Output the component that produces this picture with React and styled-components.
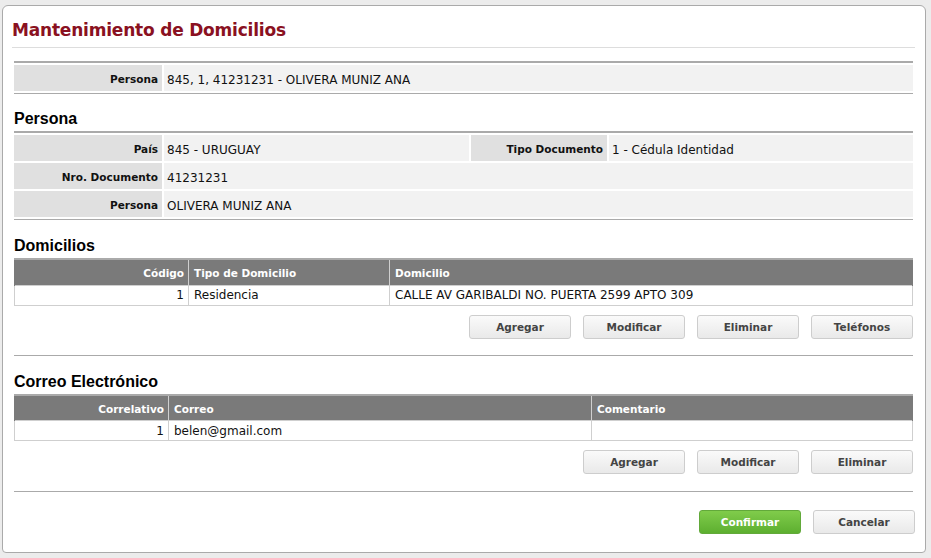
import React from 'react';
import styled, { createGlobalStyle } from 'styled-components';

const GlobalStyle = createGlobalStyle`
  html, body {
    margin: 0;
    padding: 0;
    background: #ececec;
  }
  body {
    font-family: 'DejaVu Sans', Tahoma, Verdana, sans-serif;
    font-size: 12px;
    color: #111;
  }
`;

const Page = styled.div`
  padding: 5px 5px 5px 2px;
`;

const Panel = styled.div`
  background: #fff;
  border: 1px solid #aaa;
  border-radius: 6px 6px 4px 4px;
  padding: 0 12px 18px 11px;
`;

const Title = styled.h1`
  margin: 0 -2px 13px;
  padding: 14px 0 7px;
  border-bottom: 1px solid #ddd;
  font-family: 'DejaVu Sans', Tahoma, sans-serif;
  font-size: 17px;
  letter-spacing: -0.2px;
  font-weight: bold;
  color: #8a1121;
  line-height: 20px;
`;

const SectionTitle = styled.h2`
  margin: ${p => p.$top || 16}px 0 3px;
  font-family: 'Liberation Sans', Arial, sans-serif;
  font-size: 16px;
  font-weight: bold;
  line-height: 18px;
  color: #000;
`;

const InfoGrid = styled.div`
  display: grid;
  grid-template-columns: ${p => p.$cols};
  gap: 2px;
  padding: 2px 0;
  border-top: 2px solid #aaa;
  border-bottom: 1px solid #aaa;
`;

const Label = styled.div`
  background: #e0e0e0;
  height: 26px;
  padding: 8px 4px 0 0;
  box-sizing: border-box;
  text-align: right;
  font-weight: bold;
  font-size: 10.5px;
  color: #111;
`;

const Value = styled.div`
  background: #f2f2f2;
  height: 26px;
  padding: 8px 0 0 3px;
  box-sizing: border-box;
  font-size: 12px;
  color: #111;
  grid-column: ${p => p.$span || 'auto'};
`;

const Grid = styled.table`
  width: 100%;
  table-layout: fixed;
  border-collapse: collapse;
  border-top: 2px solid #aaa;
`;

const Th = styled.th`
  box-sizing: border-box;
  width: ${p => p.$w || 'auto'};
  background: #7a7a7a;
  color: #fff;
  height: 26px;
  padding: 2px 4px 0 5px;
  font-size: 10.5px;
  font-weight: bold;
  text-align: ${p => (p.$right ? 'right' : 'left')};
  border-left: 1px solid #cfcfcf;
  border-right: 1px solid #cfcfcf;
  &:first-child {
    border-left: 1px solid #7a7a7a;
  }
  &:last-child {
    border-right: 1px solid #7a7a7a;
  }
`;

const Td = styled.td`
  height: 19px;
  padding: 0 4px 0 5px;
  font-size: 12px;
  border: 1px solid #cfcfcf;
  text-align: ${p => (p.$right ? 'right' : 'left')};
  white-space: nowrap;
  overflow: hidden;
`;

const Actions = styled.div`
  display: flex;
  justify-content: flex-end;
  gap: 12px;
  margin-top: ${p => p.$top || 9}px;
`;

const Button = styled.button`
  width: 102px;
  height: 24px;
  border: 1px solid #cdcdcd;
  border-radius: 3px;
  background: linear-gradient(#fafafa, #e9e9e9);
  font-family: 'DejaVu Sans', Tahoma, sans-serif;
  font-size: 10.5px;
  font-weight: bold;
  color: #444;
  padding: 0;
  cursor: pointer;
`;

const PrimaryButton = styled(Button)`
  border-color: #62a93a;
  background: linear-gradient(#80cc4b, #5daf30);
  color: #fff;
`;

const Divider = styled.hr`
  border: 0;
  border-top: 1px solid #aaa;
  margin: ${p => p.$top || 16}px 0 0;
`;

const Footer = styled.div`
  margin: 0 -2px;
`;

const App = () => (
  <Page>
    <GlobalStyle />
    <Panel>
      <Title>Mantenimiento de Domicilios</Title>

      <InfoGrid $cols="148px 1fr">
        <Label>Persona</Label>
        <Value>845, 1, 41231231 - OLIVERA MUNIZ ANA</Value>
      </InfoGrid>

      <SectionTitle>Persona</SectionTitle>
      <InfoGrid $cols="148px 305px 136px 1fr">
        <Label>País</Label>
        <Value>845 - URUGUAY</Value>
        <Label>Tipo Documento</Label>
        <Value>1 - Cédula Identidad</Value>
        <Label>Nro. Documento</Label>
        <Value $span="2 / 5">41231231</Value>
        <Label>Persona</Label>
        <Value $span="2 / 5">OLIVERA MUNIZ ANA</Value>
      </InfoGrid>

      <SectionTitle $top={17}>Domicilios</SectionTitle>
      <Grid>
        <thead>
          <tr>
            <Th $w="174px" $right>Código</Th>
            <Th $w="201px">Tipo de Domicilio</Th>
            <Th>Domicilio</Th>
          </tr>
        </thead>
        <tbody>
          <tr>
            <Td $right>1</Td>
            <Td>Residencia</Td>
            <Td>CALLE AV GARIBALDI NO. PUERTA 2599 APTO 309</Td>
          </tr>
        </tbody>
      </Grid>
      <Actions>
        <Button>Agregar</Button>
        <Button>Modificar</Button>
        <Button>Eliminar</Button>
        <Button>Teléfonos</Button>
      </Actions>

      <Divider />
      <SectionTitle $top={17}>Correo Electrónico</SectionTitle>
      <Grid>
        <thead>
          <tr>
            <Th $w="154px" $right>Correlativo</Th>
            <Th $w="423px">Correo</Th>
            <Th>Comentario</Th>
          </tr>
        </thead>
        <tbody>
          <tr>
            <Td $right>1</Td>
            <Td>belen@gmail.com</Td>
            <Td />
          </tr>
        </tbody>
      </Grid>
      <Actions>
        <Button>Agregar</Button>
        <Button>Modificar</Button>
        <Button>Eliminar</Button>
      </Actions>

      <Divider $top={17} />
      <Footer>
        <Actions $top={18}>
          <PrimaryButton>Confirmar</PrimaryButton>
          <Button>Cancelar</Button>
        </Actions>
      </Footer>
    </Panel>
  </Page>
);

export default App;
